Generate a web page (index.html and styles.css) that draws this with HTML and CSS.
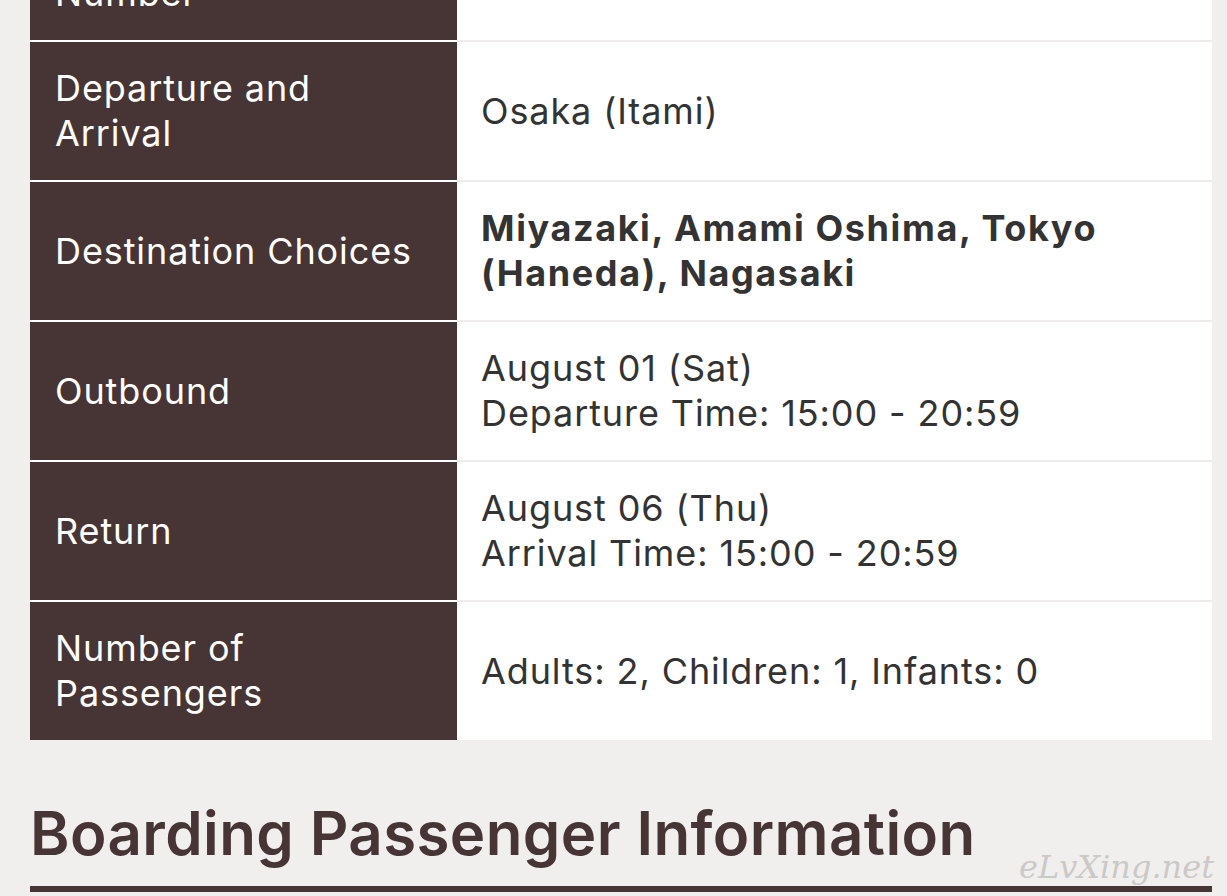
FILE: index.html
```html
<!DOCTYPE html>
<html lang="en">
<head>
    <meta charset="UTF-8">
    <meta name="viewport" content="width=device-width, initial-scale=1.0">
    <title>Reservation Details</title>
    <link rel="stylesheet" href="styles.css">
</head>
<body>
    <div class="container">
        <table class="details">
            <tbody>
                <tr>
                    <th>Reservation<br>Number</th>
                    <td>A1B2C3</td>
                </tr>
                <tr>
                    <th>Departure and<br>Arrival</th>
                    <td>Osaka (Itami)</td>
                </tr>
                <tr>
                    <th>Destination Choices</th>
                    <td class="strong">Miyazaki, Amami Oshima, Tokyo (Haneda), Nagasaki</td>
                </tr>
                <tr>
                    <th>Outbound</th>
                    <td>August 01 (Sat)<br>Departure Time: 15:00 - 20:59</td>
                </tr>
                <tr>
                    <th>Return</th>
                    <td>August 06 (Thu)<br>Arrival Time: 15:00 - 20:59</td>
                </tr>
                <tr>
                    <th>Number of<br>Passengers</th>
                    <td>Adults: 2, Children: 1, Infants: 0</td>
                </tr>
            </tbody>
        </table>

        <div class="section-title">
            <h2>Boarding Passenger Information</h2>
            <span class="watermark">eLvXing.net</span>
        </div>
    </div>
</body>
</html>
```

FILE: styles.css
```css
body {
    font-family: Inter, "Noto Sans", sans-serif;
    background-color: #f1efee;
    margin: 0;
    padding: 0;
    overflow: hidden;
}
.container {
    padding: 0 15px 0 30px;
}
.details {
    width: 100%;
    border-collapse: collapse;
    margin-top: -98px;
}
.details th,
.details td {
    height: 138px;
    padding: 0 24px;
    font-size: 36px;
    line-height: 45px;
    letter-spacing: 0.9px;
    text-align: left;
    vertical-align: middle;
}
.details th {
    width: 378px;
    padding-left: 25px;
    background-color: #473535;
    color: #fff;
    font-weight: normal;
}
.details td {
    background-color: #fff;
    color: #333;
}
.details tr + tr th {
    border-top: 2px solid #fff;
}
.details tr + tr td {
    border-top: 2px solid #eeeceb;
}
.details td.strong {
    font-weight: 700;
    letter-spacing: 1.6px;
}
.section-title {
    position: relative;
    margin-top: 58px;
    border-bottom: 6px solid #473535;
    padding-bottom: 18px;
}
.section-title h2 {
    margin: 0;
    font-size: 60px;
    line-height: 70px;
    letter-spacing: 0.4px;
    font-weight: 600;
    color: #473535;
}
.watermark {
    position: absolute;
    right: -2px;
    bottom: 0;
    font-family: "DejaVu Serif", serif;
    font-style: italic;
    font-size: 32px;
    color: #cbc9c8;
}
```
